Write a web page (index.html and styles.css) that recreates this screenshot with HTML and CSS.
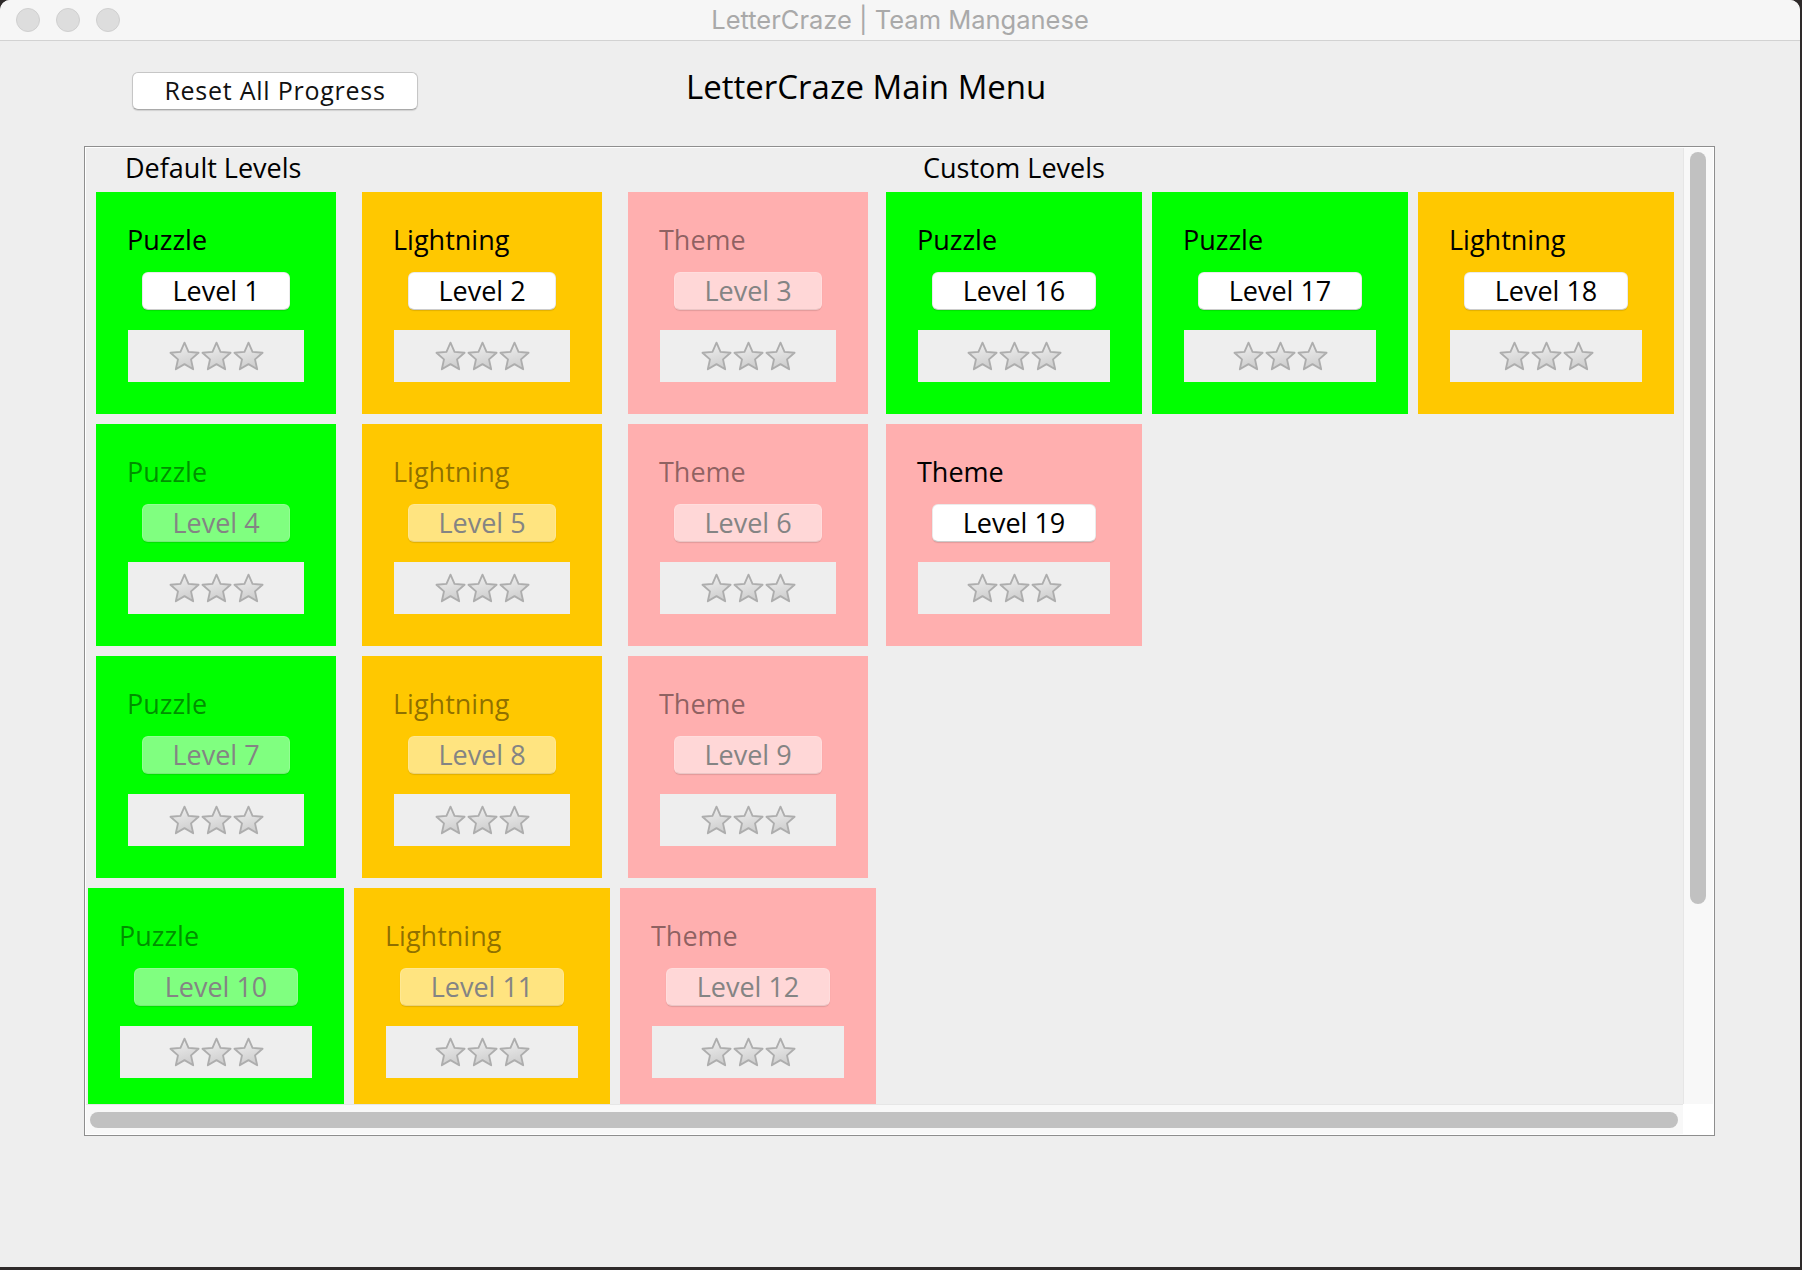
FILE: index.html
```html
<!DOCTYPE html>
<html>
<head>
<meta charset="utf-8">
<title>LetterCraze | Team Manganese</title>
<link rel="stylesheet" href="styles.css">
</head>
<body>
<svg class="defs" width="0" height="0" aria-hidden="true">
  <defs>
    <linearGradient id="starfill" x1="0" y1="0" x2="0.3" y2="1">
      <stop offset="0" stop-color="#f2f2f2"/>
      <stop offset="1" stop-color="#cfcfcf"/>
    </linearGradient>
    <symbol id="star" viewBox="0 0 30 29">
      <polygon points="15,1.6 18.9,10.5 28.6,11.4 21.3,17.8 23.4,27.3 15,22.4 6.6,27.3 8.7,17.8 1.4,11.4 11.1,10.5" fill="url(#starfill)" stroke="#adadad" stroke-width="1.8" stroke-linejoin="round"/>
    </symbol>
  </defs>
</svg>
<div class="window">
  <div class="titlebar">
    <div class="lights"><span class="light"></span><span class="light"></span><span class="light"></span></div>
    <div class="wtitle">LetterCraze | Team Manganese</div>
    <div class="tb-spacer"></div>
  </div>
  <div class="body">
    <div class="toolbar">
      <button class="reset">Reset All Progress</button>
      <h1 class="main-title">LetterCraze Main Menu</h1>
    </div>
    <div class="scrollpane">
      <div class="viewport">
        <div class="content">
          <section class="section">
            <div class="sec-title">Default Levels</div>
            <div class="grid">
              <div class="card green inset"><div class="label">Puzzle</div><div class="lvl">Level 1</div><div class="stars"><svg class="star"><use href="#star"/></svg><svg class="star"><use href="#star"/></svg><svg class="star"><use href="#star"/></svg></div></div>
              <div class="card orange inset"><div class="label">Lightning</div><div class="lvl">Level 2</div><div class="stars"><svg class="star"><use href="#star"/></svg><svg class="star"><use href="#star"/></svg><svg class="star"><use href="#star"/></svg></div></div>
              <div class="card pink inset off"><div class="label">Theme</div><div class="lvl">Level 3</div><div class="stars"><svg class="star"><use href="#star"/></svg><svg class="star"><use href="#star"/></svg><svg class="star"><use href="#star"/></svg></div></div>
              <div class="card green inset off"><div class="label">Puzzle</div><div class="lvl">Level 4</div><div class="stars"><svg class="star"><use href="#star"/></svg><svg class="star"><use href="#star"/></svg><svg class="star"><use href="#star"/></svg></div></div>
              <div class="card orange inset off"><div class="label">Lightning</div><div class="lvl">Level 5</div><div class="stars"><svg class="star"><use href="#star"/></svg><svg class="star"><use href="#star"/></svg><svg class="star"><use href="#star"/></svg></div></div>
              <div class="card pink inset off"><div class="label">Theme</div><div class="lvl">Level 6</div><div class="stars"><svg class="star"><use href="#star"/></svg><svg class="star"><use href="#star"/></svg><svg class="star"><use href="#star"/></svg></div></div>
              <div class="card green inset off"><div class="label">Puzzle</div><div class="lvl">Level 7</div><div class="stars"><svg class="star"><use href="#star"/></svg><svg class="star"><use href="#star"/></svg><svg class="star"><use href="#star"/></svg></div></div>
              <div class="card orange inset off"><div class="label">Lightning</div><div class="lvl">Level 8</div><div class="stars"><svg class="star"><use href="#star"/></svg><svg class="star"><use href="#star"/></svg><svg class="star"><use href="#star"/></svg></div></div>
              <div class="card pink inset off"><div class="label">Theme</div><div class="lvl">Level 9</div><div class="stars"><svg class="star"><use href="#star"/></svg><svg class="star"><use href="#star"/></svg><svg class="star"><use href="#star"/></svg></div></div>
              <div class="card green off"><div class="label">Puzzle</div><div class="lvl">Level 10</div><div class="stars"><svg class="star"><use href="#star"/></svg><svg class="star"><use href="#star"/></svg><svg class="star"><use href="#star"/></svg></div></div>
              <div class="card orange off"><div class="label">Lightning</div><div class="lvl">Level 11</div><div class="stars"><svg class="star"><use href="#star"/></svg><svg class="star"><use href="#star"/></svg><svg class="star"><use href="#star"/></svg></div></div>
              <div class="card pink off"><div class="label">Theme</div><div class="lvl">Level 12</div><div class="stars"><svg class="star"><use href="#star"/></svg><svg class="star"><use href="#star"/></svg><svg class="star"><use href="#star"/></svg></div></div>
            </div>
          </section>
          <section class="section">
            <div class="sec-title">Custom Levels</div>
            <div class="grid">
              <div class="card green"><div class="label">Puzzle</div><div class="lvl">Level 16</div><div class="stars"><svg class="star"><use href="#star"/></svg><svg class="star"><use href="#star"/></svg><svg class="star"><use href="#star"/></svg></div></div>
              <div class="card green"><div class="label">Puzzle</div><div class="lvl">Level 17</div><div class="stars"><svg class="star"><use href="#star"/></svg><svg class="star"><use href="#star"/></svg><svg class="star"><use href="#star"/></svg></div></div>
              <div class="card orange"><div class="label">Lightning</div><div class="lvl">Level 18</div><div class="stars"><svg class="star"><use href="#star"/></svg><svg class="star"><use href="#star"/></svg><svg class="star"><use href="#star"/></svg></div></div>
              <div class="card pink"><div class="label">Theme</div><div class="lvl">Level 19</div><div class="stars"><svg class="star"><use href="#star"/></svg><svg class="star"><use href="#star"/></svg><svg class="star"><use href="#star"/></svg></div></div>
            </div>
          </section>
        </div>
      </div>
      <div class="vscroll"><div class="vthumb"></div></div>
      <div class="hscroll"><div class="hthumb"></div></div>
      <div class="corner"></div>
    </div>
  </div>
</div>
</body>
</html>
```

FILE: styles.css
```css
* { box-sizing: border-box; }
html, body { margin: 0; padding: 0; }
body {
  background: #2e2a2a;
  width: 1802px;
  height: 1270px;
  overflow: hidden;
  font-family: "Open Sans", "Noto Sans", sans-serif;
}
.defs { display: block; width: 0; height: 0; overflow: hidden; }

.window {
  width: 1800px;
  height: 1267px;
  background: #eeeeee;
  border-radius: 10px 10px 0 0;
  overflow: hidden;
  display: flex;
  flex-direction: column;
}

.titlebar {
  height: 41px;
  flex: none;
  background: #f6f6f6;
  border-bottom: 1px solid #d2d2d2;
  display: grid;
  grid-template-columns: 1fr auto 1fr;
  align-items: start;
}
.lights {
  display: flex;
  gap: 16px;
  padding: 8px 0 0 16px;
}
.light {
  width: 24px;
  height: 24px;
  border-radius: 50%;
  background: #dddddd;
  border: 1px solid #cfcfcf;
}
.wtitle {
  font-family: Inter, "Liberation Sans", sans-serif;
  font-size: 25.5px;
  line-height: 40px;
  color: #a9a9a9;
  white-space: nowrap;
}

.body { flex: 1; display: flex; flex-direction: column; }

.toolbar {
  height: 105px;
  flex: none;
  display: flex;
  align-items: flex-start;
}
.reset {
  margin: 31px 0 0 132px;
  width: 286px;
  height: 38px;
  padding: 0 0 3px;
  background: #ffffff;
  border: 1px solid #c6c6c6;
  border-bottom-color: #a9a9a9;
  border-radius: 6px;
  box-shadow: 0 1px 1px rgba(0,0,0,0.12);
  font-family: "Open Sans", "Noto Sans", sans-serif;
  font-size: 25px;
  line-height: 32px;
  color: #111;
  letter-spacing: 0.75px;
}
.main-title {
  margin: 26px 0 0 268px;
  font-weight: 400;
  font-size: 33px;
  line-height: 40px;
  color: #000;
  white-space: nowrap;
}

.scrollpane {
  margin-left: 84px;
  width: 1631px;
  height: 990px;
  border: 1px solid #8e8e8e;
  box-shadow: inset 0 0 0 1px #ffffff;
  padding: 1px;
  display: grid;
  grid-template-columns: 1597px 30px;
  grid-template-rows: 956px 30px;
}
.viewport { overflow: hidden; background: #eeeeee; }
.content {
  display: flex;
  gap: 10px;
  padding: 2px 0 0 2px;
}
.section { width: 788px; flex: none; }
.sec-title {
  font-size: 27px;
  line-height: 36px;
  height: 36px;
  margin-bottom: 6px;
  padding-left: 37px;
  color: #000;
  white-space: nowrap;
}
.grid {
  display: grid;
  grid-template-columns: repeat(3, 256px);
  grid-auto-rows: 222px;
  gap: 10px;
}

.card {
  padding: 33px 32px 0;
  display: flex;
  flex-direction: column;
}
.card.inset { margin: 0 8px; }
.green { background: #00ff00; }
.orange { background: #ffc800; }
.pink { background: #ffafaf; }

.label {
  font-size: 27px;
  line-height: 30px;
  height: 30px;
  margin-left: -1px;
  color: #000;
  white-space: nowrap;
}
.lvl {
  margin: 17px 14px 0;
  height: 38px;
  background: #ffffff;
  border: 1px solid rgba(0,0,0,0.08);
  border-bottom-color: rgba(0,0,0,0.2);
  border-radius: 6px;
  box-shadow: 0 1px 1px rgba(0,0,0,0.12);
  font-size: 27px;
  line-height: 34px;
  padding-top: 1px;
  text-align: center;
  color: #000;
  white-space: nowrap;
}
.off .label { color: rgba(0,0,0,0.45); }
.off .lvl {
  background: rgba(255,255,255,0.5);
  border-color: rgba(255,255,255,0.15);
  border-bottom-color: rgba(0,0,0,0.08);
  color: #848484;
}
.stars {
  margin-top: 20px;
  height: 52px;
  background: #eeeeee;
  display: flex;
  justify-content: center;
  align-items: center;
  gap: 1px;
}
.star {
  width: 31px;
  height: 30px;
  filter: blur(0.35px);
}

.vscroll {
  background: #f8f8f8;
  border-left: 1px solid #e6e6e6;
  padding: 4px 0 0 6px;
}
.vthumb {
  width: 16px;
  height: 752px;
  border-radius: 8px;
  background: #c1c1c1;
}
.hscroll {
  background: #f8f8f8;
  border-top: 1px solid #e6e6e6;
  padding: 7px 0 0 4px;
}
.hthumb {
  width: 1588px;
  height: 16px;
  border-radius: 8px;
  background: #c1c1c1;
}
.corner { background: #ffffff; }
```
